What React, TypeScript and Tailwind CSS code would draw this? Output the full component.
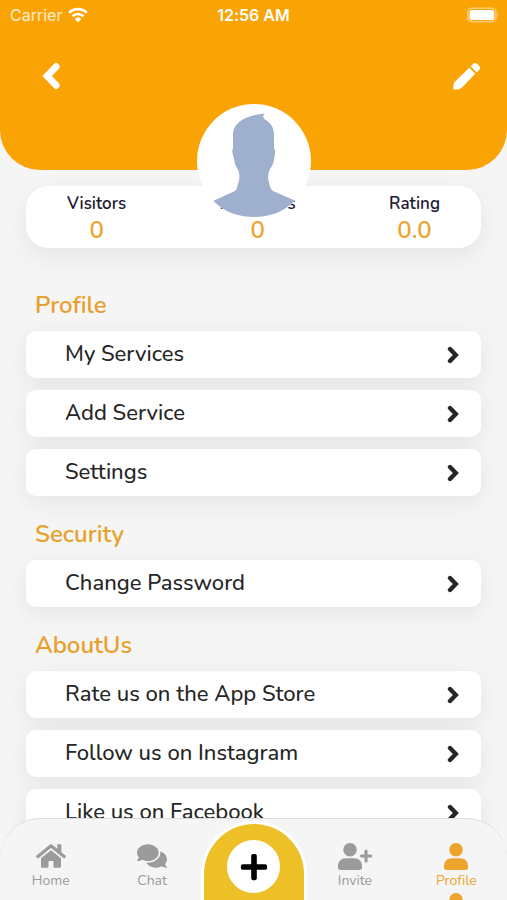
import { FaComments, FaHome, FaPlus } from "react-icons/fa";

interface StatProps {
  label: string;
  value: string;
}

interface SectionProps {
  title: string;
  items: string[];
}

interface TabProps {
  label: string;
  icon: React.ReactNode;
  active?: boolean;
}

const sections: SectionProps[] = [
  { title: "Profile", items: ["My Services", "Add Service", "Settings"] },
  { title: "Security", items: ["Change Password"] },
  {
    title: "AboutUs",
    items: [
      "Rate us on the App Store",
      "Follow us on Instagram",
      "Like us on Facebook",
    ],
  },
];

const Chevron = ({ className }: { className: string }) => (
  <svg
    viewBox="0 0 12 18"
    className={className}
    fill="none"
    stroke="currentColor"
    strokeWidth={4.4}
    strokeLinecap="round"
    strokeLinejoin="miter"
  >
    <path d="M3 3L8.8 9L3 15" />
  </svg>
);

const PencilIcon = () => (
  <svg viewBox="0 0 28 28" className="size-7" fill="currentColor">
    <path d="M16.300 5.800L22.300 11.700L9 25.600Q7.600 27 5.500 27.200L1.600 27.600Q0.200 27.700 0.300 26.300L0.600 22.500Q0.800 20.800 2 19.600Z" />
    <path d="M17.700 4.400L20.400 1.600Q22 0.200 23.600 1.600L26.600 4.600Q28 6.200 26.600 7.600L23.800 10.400Z" />
  </svg>
);

const UserIcon = () => (
  <svg viewBox="0 0 24 27" className="w-6 h-[27px] shrink-0" fill="currentColor">
    <circle cx="12" cy="6.8" r="6.8" />
    <path d="M8 15.2H16C21 15.2 24 18.5 24 23V24.5C24 26 23.2 27 21.5 27H2.500C0.800 27 0 26 0 24.5V23C0 18.5 3 15.2 8 15.2Z" />
  </svg>
);

const InviteIcon = () => (
  <svg viewBox="0 0 34 27" className="w-[34px] h-[27px]" fill="currentColor">
    <circle cx="12" cy="6.8" r="6.8" />
    <path d="M8 15.2H16C21 15.2 24 18.5 24 23V24.5C24 26 23.2 27 21.5 27H2.500C0.800 27 0 26 0 24.5V23C0 18.5 3 15.2 8 15.2Z" />
    <path d="M28 8v10M23.500 13h9" stroke="currentColor" strokeWidth={3.2} strokeLinecap="round" />
  </svg>
);

const StatusBar = () => (
  <div className="grid grid-cols-3 items-center h-[30px] px-2 text-white font-['Inter',sans-serif]">
    <div className="flex items-center gap-1.5 pl-0.5 text-base text-white/80">
      Carrier
      <svg viewBox="0 0 20 15" className="w-5 h-4" fill="none">
        <path d="M1.2 5.2a12.6 12.6 0 0117.6 0" stroke="#fff" strokeWidth={2.6} />
        <path d="M4.5 8.7a7.9 7.9 0 0111 0" stroke="#fff" strokeWidth={2.6} />
        <path d="M10 14.8L6.7 11.4a4.8 4.8 0 016.6 0z" fill="#fff" />
      </svg>
    </div>
    <div className="text-center text-base font-semibold whitespace-nowrap">
      12:56 AM
    </div>
    <svg viewBox="0 0 34 16" className="w-8 h-4 justify-self-end" fill="none">
      <rect x="0.8" y="0.8" width="30" height="14.4" rx="4.5" stroke="#fff" strokeOpacity={0.45} strokeWidth={1.6} />
      <rect x="2.6" y="2.6" width="26.4" height="10.8" rx="2.8" fill="#fff" />
      <path d="M32.5 5.6q1.5 2.4 0 4.8z" fill="#fff" fillOpacity={0.5} />
    </svg>
  </div>
);

const Avatar = () => (
  <div className="absolute left-1/2 -bottom-12 -translate-x-1/2 z-10 size-[114px] rounded-full bg-white overflow-hidden">
    <svg viewBox="0 0 114 114" className="size-full" fill="#9eb0cd">
      <path d="M36 28C38 18 49 11 68 9.5C65 12 66 14 69 16C75 20 77 25 77 31L77 45C79 45 78 50 77 56C76 60 75 62 73 65C71 70 71 72 71.5 77C73 80 72 84 76 87L99 97C86 108 73 113 57 113C41 113 27 108 16 97L38 87C41 85 40 80 42 77C43 71 42 67 40 64C38 61 38 59 37 55C36 50 34 46 36 45Z" />
    </svg>
  </div>
);

const Stat = ({ label, value }: StatProps) => (
  <div className="flex flex-col items-center">
    <span className="text-[17px] leading-6 font-semibold text-[#1b1833]">
      {label}
    </span>
    <span className="text-2xl leading-7 font-semibold text-[#eda42f]">
      {value}
    </span>
  </div>
);

const Section = ({ title, items }: SectionProps) => (
  <section>
    <h2 className="pl-[9px] pt-5 pb-2 text-2xl leading-9 font-semibold text-[#e8a02c]">
      {title}
    </h2>
    <div className="flex flex-col gap-3">
      {items.map((item) => (
        <button
          key={item}
          className="flex items-center justify-between h-[47px] pl-[39px] pr-[22px] rounded-[10px] bg-white text-[22px] font-medium text-[#262626] shadow-[0_6px_24px_rgba(0,0,0,0.07)]"
        >
          {item}
          <Chevron className="w-3 h-[18px]" />
        </button>
      ))}
    </div>
  </section>
);

const Tab = ({ label, icon, active }: TabProps) => (
  <a
    href="#"
    className={`flex flex-col items-center pt-[22px] text-sm leading-5 ${
      active ? "text-[#eda42f]" : "text-[#9b9b9b]"
    }`}
  >
    <span className="flex items-center h-[30px]">{icon}</span>
    {label}
    {active && (
      <span className="pt-0.5">
        <UserIcon />
      </span>
    )}
  </a>
);

export default function App() {
  return (
    <div className="relative flex flex-col h-screen overflow-hidden bg-[#f5f5f5] font-['Nunito','Lato',sans-serif] [font-variant-ligatures:none]">
      <header className="relative shrink-0 h-[170px] rounded-b-[40px] bg-[#f9a404] text-white">
        <StatusBar />
        <div className="flex items-center justify-between pt-[30px] pl-[42px] pr-[26px]">
          <button aria-label="Back" className="py-0.5">
            <Chevron className="w-[19px] h-7 rotate-180" />
          </button>
          <button aria-label="Edit profile" className="py-0.5">
            <PencilIcon />
          </button>
        </div>
        <Avatar />
      </header>

      <main className="flex-1 min-h-0 overflow-hidden px-[26px] pt-4">
        <div className="flex justify-between h-[62px] px-[41px] pt-1.5 rounded-[22px] bg-white shadow-[0_8px_24px_rgba(0,0,0,0.07)]">
          <Stat label="Visitors" value="0" />
          <Stat label="Followers" value="0" />
          <Stat label="Rating" value="0.0" />
        </div>
        <div className="flex flex-col pt-[19px]">
          {sections.map((section) => (
            <Section key={section.title} {...section} />
          ))}
        </div>
      </main>

      <nav className="absolute inset-x-0 bottom-0 z-20 grid grid-cols-5 h-[82px] overflow-hidden rounded-t-[40px] border-t border-[#dcdcdc] bg-[#f5f5f5]">
        <Tab label="Home" icon={<FaHome className="size-[30px]" />} />
        <Tab label="Chat" icon={<FaComments className="size-[30px]" />} />
        <div className="flex justify-center pt-0.5">
          <button
            aria-label="Add"
            className="flex justify-center shrink-0 w-[106px] h-24 pt-4 rounded-t-[53px] border-[3px] border-b-0 border-white bg-[#edc027]"
          >
            <span className="flex items-center justify-center size-[53px] rounded-full bg-white text-black">
              <FaPlus className="size-[30px]" />
            </span>
          </button>
        </div>
        <Tab label="Invite" icon={<InviteIcon />} />
        <Tab label="Profile" icon={<UserIcon />} active />
      </nav>
    </div>
  );
}
